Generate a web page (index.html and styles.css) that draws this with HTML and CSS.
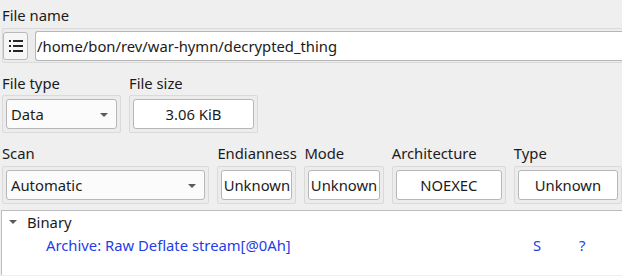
FILE: index.html
```html
<!DOCTYPE html>
<html>
<head>
<meta charset="utf-8">
<link rel="stylesheet" href="styles.css">
</head>
<body>
<div class="page">
  <section class="section sec-name">
    <div class="label">File name</div>
    <div class="frame frame-name">
      <button class="menu-btn" aria-label="menu">
        <svg width="14" height="12" viewBox="0 0 14 12">
          <rect x="0" y="0" width="2" height="2" fill="#232627"/>
          <rect x="4" y="0" width="10" height="2" fill="#232627"/>
          <rect x="0" y="5" width="2" height="2" fill="#232627"/>
          <rect x="4" y="5" width="10" height="2" fill="#232627"/>
          <rect x="0" y="10" width="2" height="2" fill="#232627"/>
          <rect x="4" y="10" width="10" height="2" fill="#232627"/>
        </svg>
      </button>
      <div class="box path">/home/bon/rev/war-hymn/decrypted_thing</div>
    </div>
  </section>

  <section class="section row sec-type">
    <div class="field w-filetype">
      <div class="label">File type</div>
      <div class="frame">
        <div class="combo"><span>Data</span><span class="arrow"></span></div>
      </div>
    </div>
    <div class="field w-filesize">
      <div class="label">File size</div>
      <div class="frame">
        <div class="box center">3.06 KiB</div>
      </div>
    </div>
  </section>

  <section class="section row sec-scan">
    <div class="field w-scan">
      <div class="label">Scan</div>
      <div class="frame">
        <div class="combo"><span>Automatic</span><span class="arrow"></span></div>
      </div>
    </div>
    <div class="field w-endian">
      <div class="label">Endianness</div>
      <div class="frame">
        <div class="box center">Unknown</div>
      </div>
    </div>
    <div class="field w-mode">
      <div class="label">Mode</div>
      <div class="frame">
        <div class="box center">Unknown</div>
      </div>
    </div>
    <div class="field w-arch">
      <div class="label">Architecture</div>
      <div class="frame">
        <div class="box center">NOEXEC</div>
      </div>
    </div>
    <div class="field w-type">
      <div class="label">Type</div>
      <div class="frame">
        <div class="box center">Unknown</div>
      </div>
    </div>
  </section>

  <div class="tree">
    <div class="tree-row root">
      <span class="twisty"></span>
      <span>Binary</span>
    </div>
    <div class="tree-row child">
      <span class="c-name">Archive: Raw Deflate stream[@0Ah]</span>
      <span class="c-s">S</span>
      <span class="c-q">?</span>
    </div>
  </div>
</div>
</body>
</html>
```

FILE: styles.css
```css
html, body {
  margin: 0;
  padding: 0;
  background: #efefef;
  overflow: hidden;
}

body {
  font-family: "Noto Sans", "Open Sans", sans-serif;
  font-size: 14.8px;
  color: #1b1b1b;
  width: 622px;
  height: 276px;
}

.page {
  padding: 6px 0 0 2px;
  width: 620px;
}

.label {
  line-height: 18px;
  height: 18px;
  white-space: nowrap;
}

.section {
  margin-bottom: 11px;
}

.sec-name .label {
  margin-bottom: 4px;
}

.sec-type .label {
  margin-bottom: 3px;
}

.sec-scan .label {
  margin-bottom: 4px;
}

.sec-scan {
  margin-bottom: 6px;
}

.row {
  display: flex;
  gap: 8px;
}

.field {
  display: flex;
  flex-direction: column;
}

.w-filetype { width: 119px; }
.w-filesize { width: 129px; }
.w-scan { width: 209px; }
.w-endian { width: 79px; }
.w-mode { width: 80px; }
.w-arch { width: 115px; }
.w-type { width: 109px; }

.frame {
  border: 1px solid #dadada;
  border-radius: 2px;
  background: #ececec;
  padding: 3px;
  box-sizing: border-box;
  height: 38px;
}

.frame-name {
  display: flex;
  align-items: center;
  gap: 7px;
  padding: 1px 0 1px 0;
  height: 35px;
  width: 620px;
  border-right: none;
  border-radius: 2px 0 0 2px;
}

.menu-btn {
  width: 25px;
  height: 28px;
  margin-left: 0;
  border: 1px solid #b9b9b9;
  border-radius: 3px;
  background: #f6f6f6;
  display: flex;
  align-items: center;
  justify-content: center;
  padding: 0;
  box-sizing: border-box;
}

.box {
  background: #ffffff;
  border: 1px solid #b7b7b7;
  border-radius: 3px;
  height: 30px;
  box-sizing: border-box;
  line-height: 28px;
  white-space: nowrap;
  overflow: hidden;
}

.path {
  flex: 1;
  padding-left: 1px;
  border-right: none;
  border-radius: 3px 0 0 3px;
}

.center {
  text-align: center;
}

.combo {
  height: 30px;
  box-sizing: border-box;
  border: 1px solid #b7b7b7;
  border-radius: 3px;
  background: #fbfbfb;
  display: flex;
  align-items: center;
  justify-content: space-between;
  padding: 0 8px 0 4px;
  line-height: 28px;
}

.arrow {
  width: 0;
  height: 0;
  border-left: 4px solid transparent;
  border-right: 4px solid transparent;
  border-top: 4px solid #5a5a5a;
  margin-top: 1px;
}

.tree {
  margin-left: -1px;
  background: #ffffff;
  border: 1px solid #bdbdbd;
  border-right: none;
  border-bottom: none;
  height: 65px;
  width: 621px;
  box-sizing: border-box;
}

.tree-row {
  height: 23px;
  line-height: 23px;
  display: flex;
  align-items: center;
  white-space: nowrap;
}

.root {
  padding-left: 7px;
}

.twisty {
  width: 0;
  height: 0;
  border-left: 4px solid transparent;
  border-right: 4px solid transparent;
  border-top: 4px solid #5a5a5a;
  margin-right: 10px;
  margin-top: -1px;
}

.child {
  padding-left: 44px;
  color: #1f3ee6;
}

.c-name {
  width: 487px;
}

.c-s {
  width: 46px;
}
```
